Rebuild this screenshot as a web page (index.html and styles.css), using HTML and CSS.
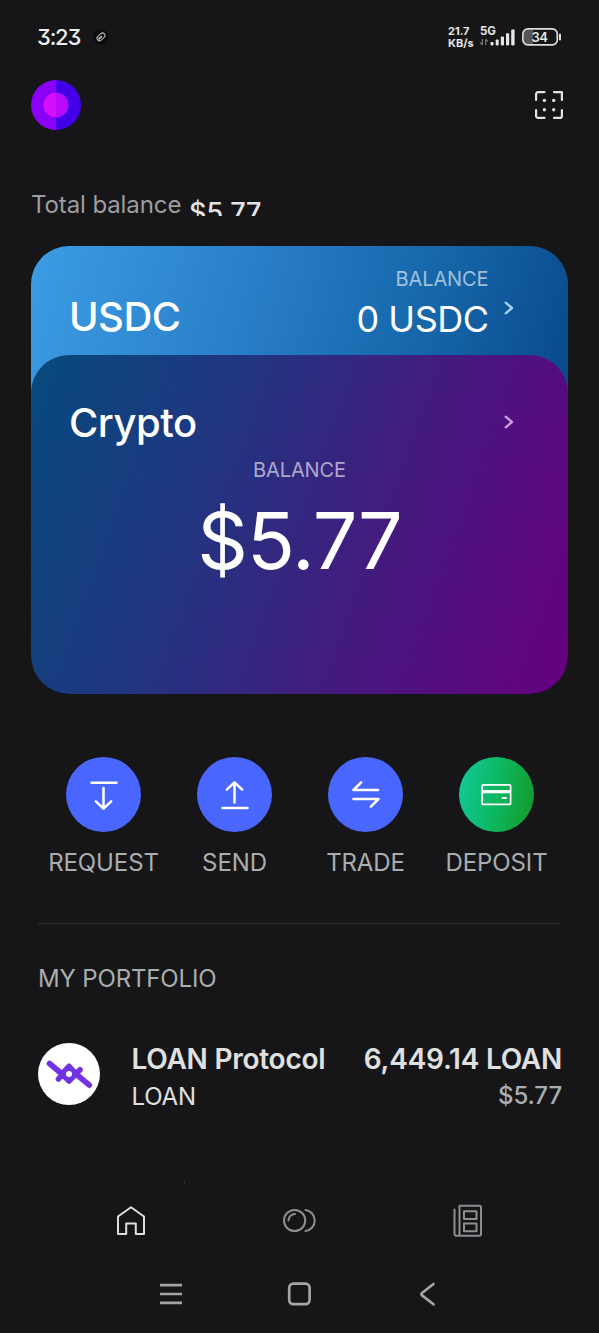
FILE: index.html
```html
<!DOCTYPE html>
<html lang="en">
<head>
<meta charset="utf-8">
<title>Wallet</title>
<link rel="stylesheet" href="styles.css">
</head>
<body>
<div class="status">
  <span class="clock">3:23</span>
  <svg class="clip" width="16" height="16" viewBox="0 0 16 16"><circle cx="8" cy="8" r="7.5" fill="#0b0b0c"/><g transform="rotate(-42 8 8)" fill="none" stroke="#bbb" stroke-width="1"><rect x="3.6" y="5.4" width="9" height="5" rx="2.5"/><path d="M4.6 8h4.6" stroke-width="1.8"/></g></svg>
  <div class="net"><span>21.7</span><span>KB/s</span></div>
  <svg class="signal" width="36" height="24" viewBox="0 0 36 24"><text class="gen" x="0" y="10" textLength="16">5G</text><g fill="#e6e6e6"><rect x="10.5" y="17" width="3" height="3.4" rx=".8"/><rect x="15.7" y="14.5" width="3" height="5.9" rx=".8"/><rect x="20.8" y="11.5" width="3.2" height="8.9" rx=".8"/><rect x="26" y="8.3" width="3.2" height="12.1" rx=".8"/><rect x="31.2" y="4.5" width="3.4" height="15.9" rx=".8"/></g><path d="M2.4 14v5.8M2.4 19.8L.2 17.500M5.600 20v-5.800M5.600 14.200L7.800 16.500" stroke="#777" stroke-width="1.2" fill="none"/></svg>
  <svg class="battery" width="40" height="18" viewBox="0 0 40 18"><path d="M5 2h6v14H5a3 3 0 0 1-3-3V5a3 3 0 0 1 3-3z" fill="#555"/><rect x=".9" y=".9" width="34.4" height="16" rx="5" fill="none" stroke="#ddd" stroke-width="1.7"/><path d="M38 6.500v5" stroke="#ddd" stroke-width="2" stroke-linecap="round"/><text class="level" x="9.500" y="13.800" textLength="16.500">34</text></svg>
</div>

<header class="header">
  <svg width="50" height="50" viewBox="0 0 50 50"><path d="M25 0a25 25 0 0 0 0 50z" fill="#8b00f6"/><path d="M25 0a25 25 0 0 1 0 50z" fill="#4300e8"/><path d="M25 12.5a12.5 12.5 0 0 0 0 25z" fill="#d50ffb"/><path d="M25 12.5a12.5 12.5 0 0 1 0 25z" fill="#b70bf7"/></svg>
  <svg width="30" height="30" viewBox="0 0 30 30" fill="none" stroke="#e3e3e3" stroke-width="2.2" stroke-linecap="round" stroke-linejoin="round"><path d="M2.1 10V4.1a2 2 0 0 1 2-2H10.500M20 2.100h7.900V10M27.900 20v5.900a2 2 0 0 1-2 2H20M10.500 27.900H4.100a2 2 0 0 1-2-2V20"/><g fill="#e3e3e3" stroke="none"><circle cx="10.400" cy="10.400" r="1.700"/><circle cx="19.700" cy="10.400" r="1.700"/><circle cx="10.400" cy="19.700" r="1.700"/><circle cx="19.700" cy="19.700" r="1.700"/></g></svg>
</header>

<div class="total"><span class="total-label">Total balance</span><span class="total-window"><span class="total-value">$5.77</span></span></div>

<section class="wallets">
  <div class="usdc">
    <span class="name">USDC</span>
    <div class="usdc-balance"><span class="caption">BALANCE</span><span class="amount">0 USDC</span></div>
    <svg class="chevron" width="10" height="14" viewBox="0 0 10 14"><path d="M1.700 1.700L8 7l-6.300 5.300"/></svg>
  </div>
  <div class="crypto">
    <div class="crypto-head"><span class="name">Crypto</span><svg class="chevron pink" width="10" height="14" viewBox="0 0 10 14"><path d="M1.700 1.700L8 7l-6.300 5.300"/></svg></div>
    <span class="caption">BALANCE</span>
    <span class="big">$5.77</span>
  </div>
</section>

<nav class="actions">
  <div class="action"><span class="disc"><svg width="75" height="75" viewBox="0 0 75 75"><path d="M25.500 25.700h25M37.500 31v20.500M29.800 44.300l7.700 7.400 7.700-7.400"/></svg></span><span class="label">REQUEST</span></div>
  <div class="action"><span class="disc"><svg width="75" height="75" viewBox="0 0 75 75"><path d="M25.500 51h25M37.500 45.500V25.500M29.800 32.700l7.700-7.400 7.700 7.400"/></svg></span><span class="label">SEND</span></div>
  <div class="action"><span class="disc"><svg width="75" height="75" viewBox="0 0 75 75"><path d="M50 33H25.500l7.700-7.700M25.500 42H50.500l-7.700 7.700"/></svg></span><span class="label">TRADE</span></div>
  <div class="action"><span class="disc green"><svg width="75" height="75" viewBox="0 0 75 75"><rect x="23.200" y="27.900" width="28.400" height="19.400" rx="1" stroke-width="1.700"/><path d="M23.500 34.700h28.300" stroke-width="3.200" stroke-linecap="butt"/><path d="M43.500 40.900h3.500" stroke-width="2"/></svg></span><span class="label">DEPOSIT</span></div>
</nav>

<section class="portfolio">
  <h2>MY PORTFOLIO</h2>
  <div class="asset">
    <svg width="62" height="62" viewBox="0 0 62 62"><circle cx="31" cy="31" r="31" fill="#fff"/><g stroke="#7332e2" stroke-width="5.600" stroke-linecap="round" stroke-linejoin="round" fill="none"><path d="M11.500 20.500L24 31l7 7 7-7-7-7.500L20.500 36M24 31l7-7.500M31 38L42 26.700M38 31l13.300 11.200"/></g><circle cx="31" cy="31" r="3" fill="#fff"/></svg>
    <div class="asset-names"><strong>LOAN Protocol</strong><span>LOAN</span></div>
    <div class="asset-values"><strong>6,449.14 LOAN</strong><span>$5.77</span></div>
  </div>
  <i class="speck"></i>
</section>

<nav class="tabs">
  <svg width="36" height="36" viewBox="0 0 36 36" stroke="#dedede"><path d="M5 13.500L18 4.200l13 9.300V31h-8.200V20.500h-9.600V31H5z"/></svg>
  <svg width="36" height="36" viewBox="0 0 36 36" stroke="#8f8f92"><circle cx="12.600" cy="17.500" r="10.600"/><path d="M23.500 6.900a10.700 10.700 0 0 1 0 21.200M6.500 17.500a6.500 6.500 0 0 1 6.500-6.500"/></svg>
  <svg width="36" height="36" viewBox="0 0 36 36" stroke="#8f8f92"><path d="M9.500 2.800h20a1.500 1.500 0 0 1 1.500 1.500v27a1.500 1.500 0 0 1-1.500 1.500h-23a2 2 0 0 1-2-2V6.500M9.500 2.800v30M14 8.200h12.500v7.800H14zM14 20.400h12.500v7.800H14z"/></svg>
</nav>

<nav class="system">
  <svg width="30" height="30" viewBox="0 0 30 30"><path d="M4 6.200h22M4 15h22M4 23.800h22" stroke-linecap="butt"/></svg>
  <svg width="30" height="30" viewBox="0 0 30 30"><rect x="4.200" y="4.700" width="20.400" height="20.400" rx="4"/></svg>
  <svg width="30" height="30" viewBox="0 0 30 30"><path d="M20.500 5L9 14a1.500 1.500 0 0 0 0 2.400L20.500 25.300"/></svg>
</nav>
</body>
</html>
```
FILE: styles.css
```css
* { box-sizing: border-box; }
body {
  margin: 0;
  width: 599px;
  height: 1333px;
  overflow: hidden;
  background: #161618;
  color: #e0e0e0;
  font-family: Inter, "Liberation Sans", sans-serif;
  display: flex;
  flex-direction: column;
}
svg { display: block; flex: none; }
span, strong { white-space: nowrap; }

.status { height: 74px; padding: 0 37px; display: flex; align-items: center; }
.clock { width: 56px; font-size: 22px; font-weight: 500; letter-spacing: -1.200px; color: #eee; font-feature-settings: "cv09"; }
.net {
  margin-left: 339px; width: 32px;
  display: flex; flex-direction: column;
  font-size: 11px; line-height: 12px; font-weight: 700; color: #e6e6e6;
}
.gen { font: 700 11.500px Inter, sans-serif; fill: #e6e6e6; }
.battery { margin-left: 6px; }
.level { font: 600 13px Inter, sans-serif; fill: #e6e6e6; }

.header { height: 62px; padding: 0 35px 0 31px; display: flex; align-items: center; justify-content: space-between; }

.total { height: 110px; padding: 54px 0 0 31px; display: flex; gap: 8px; }
.total-label { width: 150px; font-size: 24px; line-height: 30px; letter-spacing: -0.100px; color: #9d9da0; font-weight: 400; }
.total-window { height: 26px; overflow: hidden; }
.total-value { display: block; padding-top: 7px; font-size: 27px; line-height: 32px; font-weight: 500; color: #e4e4e4; }

.wallets {
  width: 537px; height: 448px; margin-left: 31px;
  border-radius: 38px; overflow: hidden;
  background: linear-gradient(105deg, #3c9ce4 0%, #2a80c9 38%, #1667aa 71%, #08498a 100%) 0 0 / 100% 160px no-repeat;
}
.usdc { height: 109px; padding: 17px 54px 0 38px; display: flex; }
.name { font-size: 40px; line-height: 48px; font-weight: 500; letter-spacing: -0.500px; color: #fff; }
.usdc .name { padding-top: 30px; }
.usdc-balance { margin: 0 15.500px 0 auto; display: flex; flex-direction: column; align-items: flex-end; }
.caption { font-size: 20px; line-height: 32px; letter-spacing: -0.1px; color: rgba(255, 255, 255, .6); font-weight: 400; }
.amount { font-size: 36px; line-height: 48px; letter-spacing: -0.500px; color: #fff; font-weight: 400; }
.chevron { fill: none; stroke: #a8d2f4; stroke-width: 2.300; stroke-linecap: round; stroke-linejoin: round; margin-top: 38px; }
.crypto {
  height: 339px; border-radius: 38px; padding-top: 44px;
  display: flex; flex-direction: column; align-items: center;
  background: linear-gradient(110deg, #064a7d 0%, #223480 34%, #431b7e 63%, #580a80 84%, #67007f 100%);
}
.crypto-head { width: 100%; padding: 0 54px 0 38px; display: flex; justify-content: space-between; align-items: center; }
.pink { stroke: #d0a0e4; margin: -2px 0 0; }
.crypto .caption { margin-top: 7px; }
.big { font-size: 79px; line-height: 96px; letter-spacing: -0.900px; margin: 6px 0 0; color: #fff; }

.actions { margin: 62px 38px 0 38px; height: 168px; display: grid; grid-template-columns: repeat(4, 131px); border-bottom: 1px solid #303033; }
.action { display: flex; flex-direction: column; align-items: center; padding-top: 0.500px; }
.disc { width: 75px; height: 75px; border-radius: 50%; background: #4967ff; }
.disc svg { fill: none; stroke: #fff; stroke-width: 2.500; stroke-linecap: round; stroke-linejoin: round; }
.green { background: linear-gradient(100deg, #12cb9c, #0cb761 50%, #149b2c 95%); }
.label { margin-top: 16px; font-size: 24px; line-height: 30px; letter-spacing: -0.100px; color: #a9adb0; }

.portfolio { height: 259px; padding: 40px 37px 0 38px; }
h2 { margin: 0; font-size: 24px; line-height: 30px; letter-spacing: -0.150px; font-weight: 400; color: #a9adb0; }
.asset { margin-top: 49px; display: flex; }
.asset-names { margin-left: 31.500px; display: flex; flex-direction: column; }
.asset strong { font-size: 28px; line-height: 32px; font-weight: 600; letter-spacing: -0.250px; }
.asset-names span { font-size: 24px; line-height: 30px; letter-spacing: -0.200px; margin-top: 7px; }
.asset-values { margin-left: auto; display: flex; flex-direction: column; align-items: flex-end; }
.asset-values span { font-size: 24px; line-height: 30px; letter-spacing: -0.100px; margin-top: 6px; font-weight: 500; color: #a9adb3; }
.speck { display: block; width: 1px; height: 1px; margin: 70px 0 0 146px; background: #555; }

.tabs { height: 76px; padding: 0 113px; display: flex; align-items: center; justify-content: space-between; }
.tabs svg { fill: none; stroke-width: 2; stroke-linejoin: round; stroke-linecap: round; }
.system { height: 70px; padding: 0 156px; display: flex; align-items: center; justify-content: space-between; }
.system svg { fill: none; stroke: #a5a5a5; stroke-width: 2.700; stroke-linecap: round; }
```
